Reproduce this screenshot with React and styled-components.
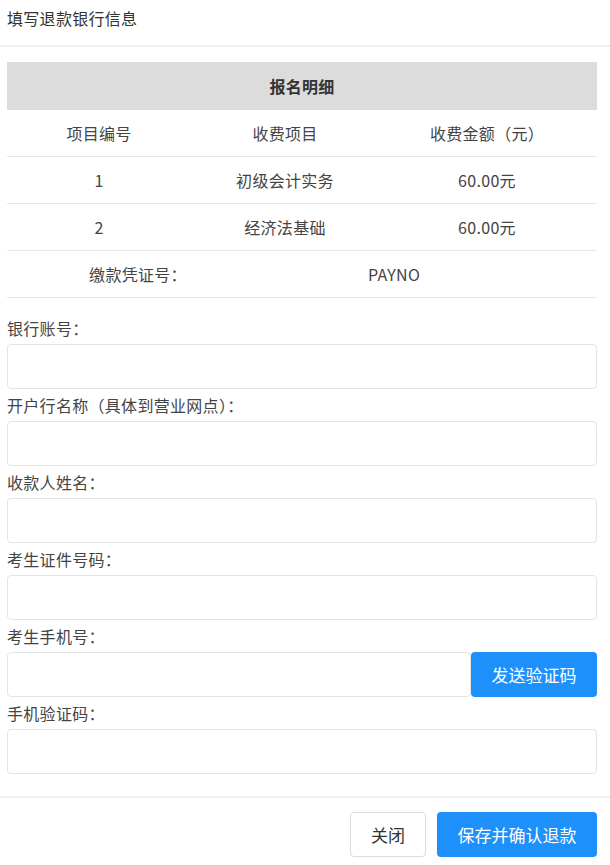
import React from 'react'
import styled, { createGlobalStyle } from 'styled-components'

const GlobalStyle = createGlobalStyle`
  html, body {
    margin: 0;
    padding: 0;
    background: #fff;
  }
  body {
    font-family: 'Noto Sans CJK SC', 'Noto Sans', sans-serif;
    color: #333;
  }
  * { box-sizing: border-box; }
`

const Page = styled.div`
  width: 610px;
  height: 865px;
  background: #fff;
  display: flex;
  flex-direction: column;
`

const Header = styled.div`
  height: 47px;
  padding: 6px 7px 0;
  font-size: 16px;
  line-height: 24px;
  letter-spacing: 0.3px;
  color: #333;
  border-bottom: 2px solid #f0f0f0;
`

const Body = styled.div`
  padding: 15px 13px 0 7px;
`

const Table = styled.div`
  width: 590px;
  font-size: 16px;
  letter-spacing: 0.3px;
  color: #444;
`

const Caption = styled.div`
  height: 48px;
  background: #dcdcdc;
  display: flex;
  align-items: center;
  justify-content: center;
  font-weight: bold;
  font-size: 16px;
  color: #333;
`

const Row = styled.div`
  display: grid;
  grid-template-columns: ${p => p.$cols || '184px 188px 216px 1fr'};
  height: 47px;
  border-bottom: ${p => (p.$line ? '1.5px solid #e6e6e6' : 'none')};
`

const Cell = styled.div`
  display: flex;
  align-items: center;
  justify-content: center;
`

const Form = styled.div`
  padding-top: 16px;
`

const Label = styled.div`
  height: 32px;
  font-size: 16px;
  line-height: 32px;
  letter-spacing: 0.3px;
  color: #444;
  margin-top: ${p => (p.$first ? '-2px' : '0')};
`

const InputRow = styled.div`
  display: flex;
  width: 590px;
`

const Input = styled.input`
  flex: 1;
  min-width: 0;
  height: 45px;
  border: 1.5px solid #e4e4e4;
  border-radius: 4px;
  outline: none;
  padding: 0 10px;
  font-family: inherit;
  font-size: 16px;
  background: #fff;
`

const Button = styled.button`
  height: 45px;
  width: ${p => p.$width}px;
  border-radius: 4px;
  font-family: inherit;
  font-size: 17px;
  cursor: pointer;
  border: ${p => (p.$primary ? 'none' : '1.5px solid #dcdcdc')};
  background: ${p => (p.$primary ? '#1e90fb' : '#fff')};
  color: ${p => (p.$primary ? '#fff' : '#333')};
`

const Footer = styled.div`
  margin-top: 22px;
  border-top: 2px solid #f0f0f0;
  padding: 14px 13px 0 0;
  display: flex;
  justify-content: flex-end;
  gap: 11px;
`

const fields = [
  '银行账号：',
  '开户行名称（具体到营业网点）：',
  '收款人姓名：',
  '考生证件号码：',
]

const items = [
  ['1', '初级会计实务', '60.00元'],
  ['2', '经济法基础', '60.00元'],
]

export default function App() {
  return (
    <Page>
      <GlobalStyle />
      <Header>填写退款银行信息</Header>
      <Body>
        <Table>
          <Caption>报名明细</Caption>
          <Row $line>
            <Cell>项目编号</Cell>
            <Cell>收费项目</Cell>
            <Cell>收费金额（元）</Cell>
            <Cell />
          </Row>
          {items.map(([no, name, fee]) => (
            <Row $line key={no}>
              <Cell>{no}</Cell>
              <Cell>{name}</Cell>
              <Cell>{fee}</Cell>
              <Cell />
            </Row>
          ))}
          <Row $line $cols="262px 250px 1fr">
            <Cell>缴款凭证号：</Cell>
            <Cell>PAYNO</Cell>
            <Cell />
          </Row>
        </Table>
        <Form>
          {fields.map((f, i) => (
            <div key={f}>
              <Label $first={i === 0}>{f}</Label>
              <InputRow>
                <Input />
              </InputRow>
            </div>
          ))}
          <Label>考生手机号：</Label>
          <InputRow>
            <Input />
            <Button $primary $width={126}>发送验证码</Button>
          </InputRow>
          <Label>手机验证码：</Label>
          <InputRow>
            <Input />
          </InputRow>
        </Form>
      </Body>
      <Footer>
        <Button $width={76}>关闭</Button>
        <Button $primary $width={160}>保存并确认退款</Button>
      </Footer>
    </Page>
  )
}
